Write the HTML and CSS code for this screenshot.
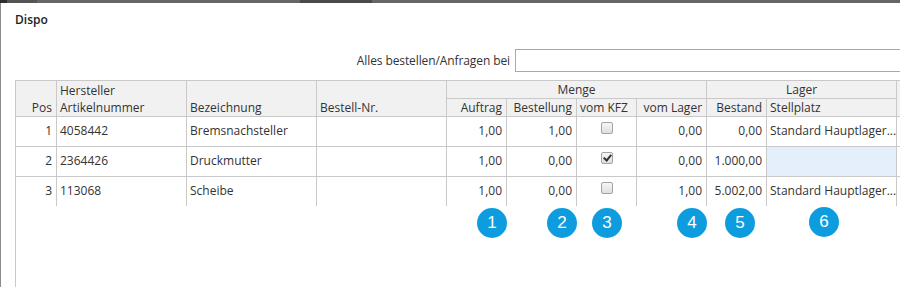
FILE: index.html
```html
<!DOCTYPE html>
<html>

<head>
    <title>Dispo</title>
    <link rel="stylesheet" href="styles.css">
</head>

<body>
    <div class="backdrop"><span class="backdrop-tab">Kundendaten</span></div>

    <div class="dialog">
        <h1 class="dialog-title">Dispo</h1>

        <div class="order-all">
            <label for="order_all_supplier">Alles bestellen/Anfragen bei</label>
            <input type="text" id="order_all_supplier" name="order_all_supplier">
        </div>

        <div class="grid-wrap">
            <table class="dispo-grid">
                <colgroup>
                    <col class="w-pos">
                    <col class="w-wide">
                    <col class="w-wide">
                    <col class="w-wide">
                    <col class="w-60">
                    <col class="w-70">
                    <col class="w-60">
                    <col class="w-70">
                    <col class="w-60">
                    <col class="w-wide">
                    <col class="w-wide">
                </colgroup>
                <thead>
                    <tr>
                        <th rowspan="2" class="num">Pos</th>
                        <th rowspan="2">Hersteller<br>Artikelnummer</th>
                        <th rowspan="2">Bezeichnung</th>
                        <th rowspan="2">Bestell-Nr.</th>
                        <th colspan="4" class="group">Menge</th>
                        <th colspan="2" class="group">Lager</th>
                        <th rowspan="2"></th>
                    </tr>
                    <tr>
                        <th class="num">Auftrag</th>
                        <th class="num">Bestellung</th>
                        <th>vom KFZ</th>
                        <th class="num">vom Lager</th>
                        <th class="num">Bestand</th>
                        <th>Stellplatz</th>
                    </tr>
                </thead>
                <tbody>
                    <tr>
                        <td class="num">1</td>
                        <td>4058442</td>
                        <td>Bremsnachsteller</td>
                        <td></td>
                        <td class="num">1,00</td>
                        <td class="num">1,00</td>
                        <td class="check"><input type="checkbox" name="from_vehicle_1"></td>
                        <td class="num">0,00</td>
                        <td class="num">0,00</td>
                        <td class="clip">Standard Hauptlager...</td>
                        <td class="clip">S</td>
                    </tr>
                    <tr>
                        <td class="num">2</td>
                        <td>2364426</td>
                        <td>Druckmutter</td>
                        <td></td>
                        <td class="num">1,00</td>
                        <td class="num">0,00</td>
                        <td class="check"><input type="checkbox" name="from_vehicle_2" checked></td>
                        <td class="num">0,00</td>
                        <td class="num">1.000,00</td>
                        <td class="clip selected"></td>
                        <td class="clip"></td>
                    </tr>
                    <tr>
                        <td class="num">3</td>
                        <td>113068</td>
                        <td>Scheibe</td>
                        <td></td>
                        <td class="num">1,00</td>
                        <td class="num">0,00</td>
                        <td class="check"><input type="checkbox" name="from_vehicle_3"></td>
                        <td class="num">1,00</td>
                        <td class="num">5.002,00</td>
                        <td class="clip">Standard Hauptlager...</td>
                        <td class="clip">S</td>
                    </tr>
                </tbody>
            </table>

            <!-- numbered callouts -->
            <span class="marker m1">1</span>
            <span class="marker m2">2</span>
            <span class="marker m3">3</span>
            <span class="marker m4">4</span>
            <span class="marker m5">5</span>
            <span class="marker m6">6</span>
        </div>
    </div>
</body>

</html>
```

FILE: styles.css
```css
html,
body {
    height: 100%;
}

body {
    margin: 0;
    display: flex;
    flex-direction: column;
    font-family: "Open Sans", "Liberation Sans", sans-serif;
    font-size: 12px;
    color: #333;
    background: #666;
    overflow: hidden;
}

/* app behind the dialog */
.backdrop {
    height: 3px;
    flex: 0 0 3px;
    overflow: hidden;
    background: linear-gradient(to right, #2e2e2e 0 7px, #555 7px 37px, #666 37px 300px, #4a4a4a 300px 372px, #666 372px);
}

.backdrop-tab {
    display: block;
    padding-left: 410px;
    margin-top: -12px;
    font-size: 14px;
    line-height: 14px;
    color: #222;
}

.dialog {
    flex: 1;
    display: flex;
    flex-direction: column;
    min-height: 0;
    background: #fff;
    border-left: 1px solid #8c8c8c;
    overflow: hidden;
}

.dialog-title {
    margin: 0;
    padding: 9px 14px 0;
    font-size: 12px;
    font-weight: 600;
    line-height: 16px;
    color: #222;
}

.order-all {
    display: flex;
    align-items: center;
    gap: 5px;
    margin-top: 21px;
}

.order-all label {
    flex: 0 0 509px;
    text-align: right;
    letter-spacing: -0.1px;
}

.order-all input[type="text"] {
    flex: 0 0 420px;
    height: 23px;
    box-sizing: border-box;
    margin: 0;
    padding: 2px 4px;
    border: 1px solid #a9a9a9;
    font: inherit;
}

.grid-wrap {
    position: relative;
    flex: 1;
    margin: 8px 0 0 14px;
    border-top: 1px solid #c9c9c9;
    border-left: 1px solid #c9c9c9;
    overflow: hidden;
}

.dispo-grid {
    width: 1011px;
    table-layout: fixed;
    border-collapse: separate;
    border-spacing: 0;
}

.w-pos { width: 41px; }
.w-60 { width: 60px; }
.w-70 { width: 70px; }
.w-wide { width: 130px; }

.dispo-grid th,
.dispo-grid td {
    border-right: 1px solid #c9c9c9;
    white-space: nowrap;
    overflow: hidden;
}

.dispo-grid th {
    padding: 0 3px;
    line-height: 17px;
    font-weight: normal;
    text-align: left;
    vertical-align: bottom;
    background: #f1f1f1;
    border-bottom: 1px solid #c9c9c9;
}

.dispo-grid th.group {
    text-align: center;
}

.dispo-grid td {
    padding: 6px 3px 7px;
    line-height: 16px;
    vertical-align: middle;
}

.dispo-grid tbody tr:not(:last-child) td {
    border-bottom: 1px solid #c9c9c9;
}

.dispo-grid .num {
    text-align: right;
    padding-right: 4px;
}

.dispo-grid td.clip {
    text-overflow: clip;
}

.dispo-grid td.selected {
    background: #e5effb;
}

.dispo-grid td.check {
    padding-top: 5px;
    vertical-align: top;
}

.check input[type="checkbox"] {
    -webkit-appearance: none;
    appearance: none;
    position: relative;
    display: block;
    width: 12px;
    height: 12px;
    margin: 0 auto;
    box-sizing: border-box;
    border: 1px solid #a3a3a3;
    border-radius: 2px;
    background: linear-gradient(#f6f6f6, #dedede);
}

.check input[type="checkbox"]:checked::after {
    content: "";
    position: absolute;
    left: 3px;
    top: 0px;
    width: 3px;
    height: 6px;
    border: solid #333;
    border-width: 0 2px 2px 0;
    transform: rotate(40deg);
}

.marker {
    position: absolute;
    top: 127px;
    width: 30px;
    height: 30px;
    border-radius: 50%;
    background: #0d9ddf;
    color: #fff;
    font-family: "Liberation Sans", Arial, sans-serif;
    font-size: 17px;
    line-height: 30px;
    text-align: center;
}

.m1 { left: 461px; }
.m2 { left: 531px; }
.m3 { left: 576px; }
.m4 { left: 661px; }
.m5 { left: 709px; }
.m6 { left: 793px; top: 126px; }
```
